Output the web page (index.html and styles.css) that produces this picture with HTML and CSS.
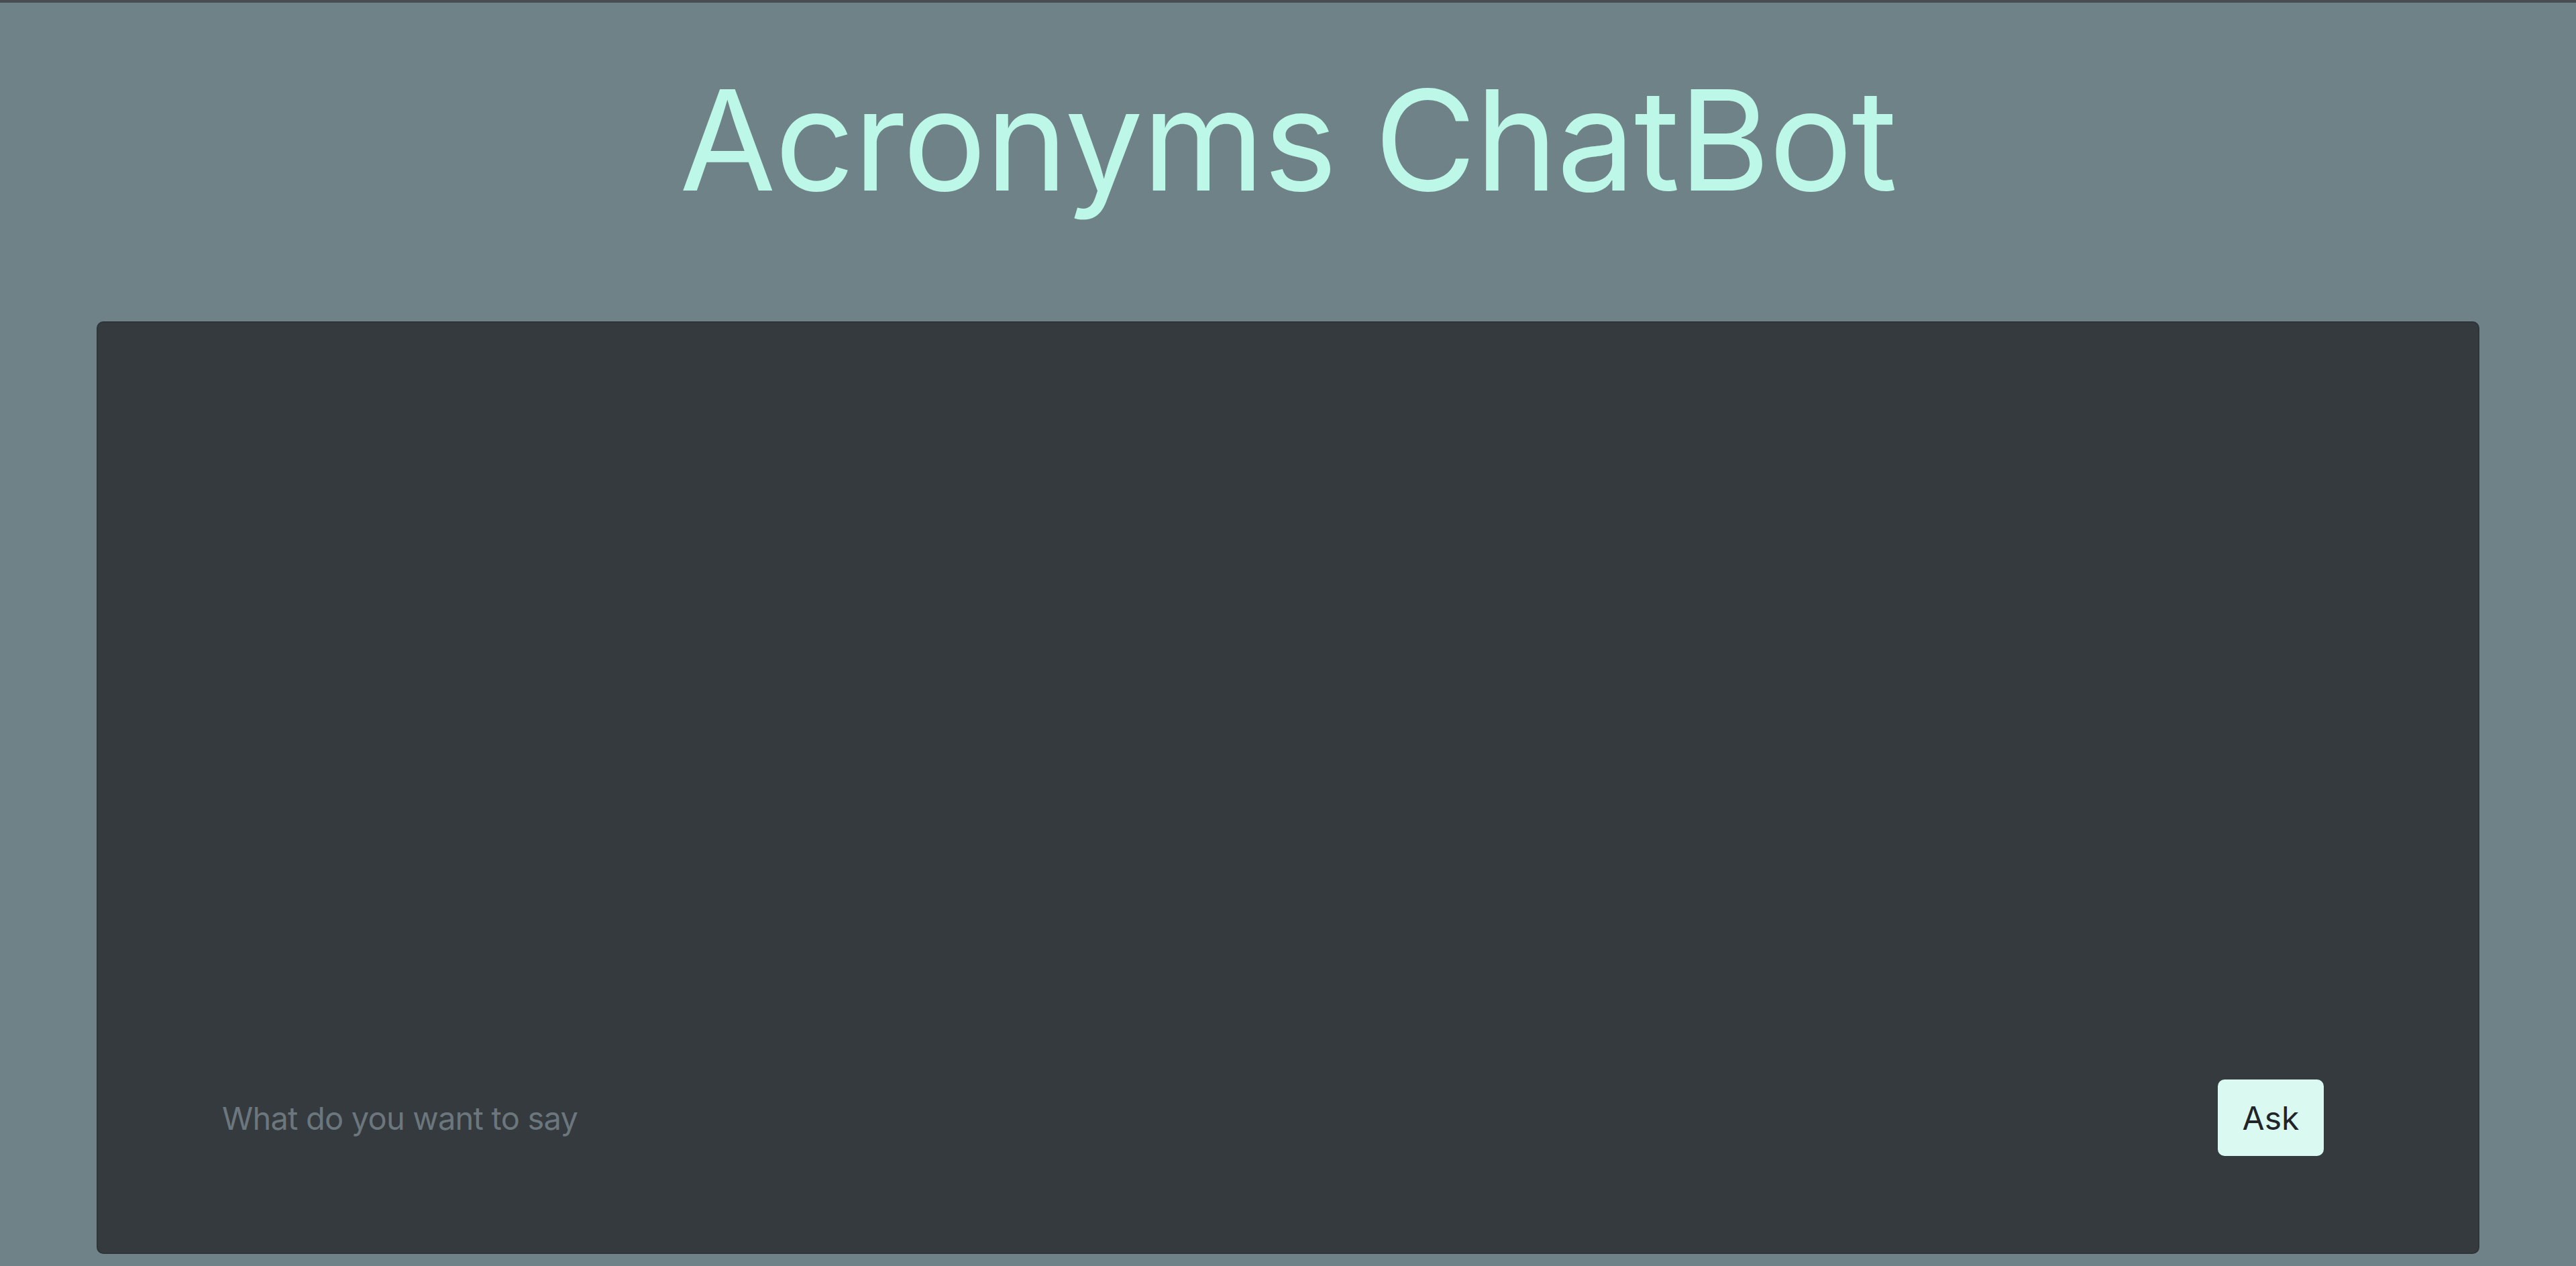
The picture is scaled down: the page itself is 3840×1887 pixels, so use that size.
FILE: index.html
```html
<!DOCTYPE html>
<html lang="en">
<head>
<meta charset="utf-8">
<title>Acronyms ChatBot</title>
<link rel="stylesheet" href="styles.css">
</head>
<body>
<div class="topbar"></div>
<h1 class="title">Acronyms ChatBot</h1>
<main class="chat">
  <div class="messages"></div>
  <form class="ask-row" onsubmit="return false">
    <input class="ask-input" type="text" placeholder="What do you want to say">
    <button class="ask-btn" type="submit">Ask</button>
  </form>
</main>
</body>
</html>
```

FILE: styles.css
```css
html, body {
  margin: 0;
  padding: 0;
}
body {
  background: #6f8287;
  font-family: Inter, "Liberation Sans", Arial, sans-serif;
}
.topbar {
  height: 4px;
  background: #474d50;
}
.title {
  margin: 78px 0 0;
  text-align: center;
  font-size: 208px;
  font-weight: 400;
  line-height: 252px;
  color: #bcf7e8;
  letter-spacing: -1.5px;
}
.chat {
  margin: 145px 144px 18px;
  height: 1390px;
  box-sizing: border-box;
  background: #343a3e;
  border: 2px solid #2e3437;
  border-radius: 10px;
  display: flex;
  flex-direction: column;
}
.messages {
  flex: 1;
}
.ask-row {
  display: flex;
  align-items: center;
  gap: 24px;
  padding: 0 230px 144px 185px;
  margin: 0;
}
.ask-input {
  flex: 1;
  background: transparent;
  border: none;
  outline: none;
  font-family: Inter, "Liberation Sans", Arial, sans-serif;
  font-size: 47px;
  letter-spacing: -0.8px;
  color: #e8eef0;
  padding: 0;
}
.ask-input::placeholder {
  color: #6c767d;
}
.ask-btn {
  width: 158px;
  height: 114px;
  background: #d9f9f1;
  border: none;
  border-radius: 10px;
  font-family: Inter, "Liberation Sans", Arial, sans-serif;
  font-size: 48px;
  color: #212529;
  padding: 0;
  cursor: pointer;
}
```
